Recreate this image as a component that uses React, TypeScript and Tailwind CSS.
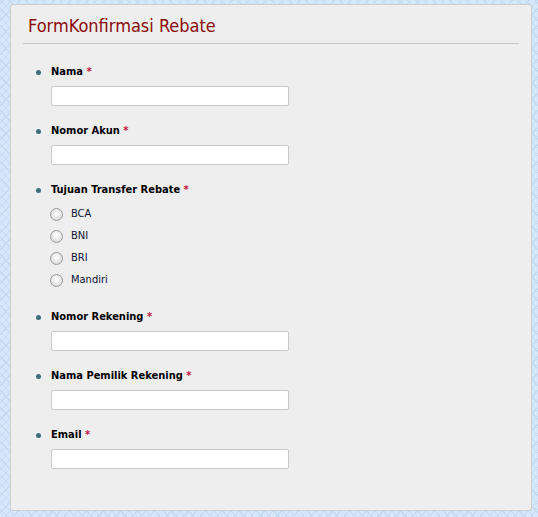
import React from 'react';

const font = "font-['DejaVu_Sans_Condensed','DejaVu_Sans',sans-serif]";

function Label({ text }: { text: string }) {
  return (
    <div className="flex items-center h-[14px] text-[11px] font-bold text-black leading-[14px]">
      <span className="w-[5px] h-[5px] rounded-full bg-[#3d6e7c] ml-[25px] mr-[10px]" />
      <span>
        {text} <span className="text-[#c0143c]">*</span>
      </span>
    </div>
  );
}

function TextField({ text }: { text: string }) {
  return (
    <div>
      <Label text={text} />
      <input
        type="text"
        className="block mt-[7px] ml-[40px] w-[238px] h-[20px] bg-white border border-[#c8c8c8] rounded-[2px] outline-none"
      />
    </div>
  );
}

function Radio({ text }: { text: string }) {
  return (
    <div className="flex items-center h-[22px] ml-[40px] text-[11px] text-[#111133]">
      <span className="w-[13px] h-[13px] rounded-full border border-[#9a9a9a] bg-[radial-gradient(circle_at_50%_40%,#ffffff_0%,#e4e4e4_60%,#cfcfcf_100%)] ml-[-1px] mr-[8px]" />
      <span>{text}</span>
    </div>
  );
}

export default function App() {
  return (
    <div
      className={`${font} w-[538px] h-[517px] pt-[4px] pl-[10px] pr-[6px] bg-[#d5e7fa] bg-[repeating-linear-gradient(45deg,transparent_0px,transparent_5px,#c4dbf2_5px,#c4dbf2_6px),repeating-linear-gradient(-45deg,transparent_0px,transparent_5px,#c4dbf2_5px,#c4dbf2_6px)]`}
    >
      <div className="h-[507px] bg-[#eeeeee] border border-[#cfcfcf] rounded-[3px]">
        <div className="mx-[12px] pt-[10px] pb-[6px] border-b border-[#c8c8c8]">
          <h1 className="pl-[5px] text-[18px] leading-[22px] text-[#8b0a0a] font-normal">
            FormKonfirmasi Rebate
          </h1>
        </div>
        <div className="pt-[21px] flex flex-col">
          <TextField text="Nama" />
          <div className="h-[18px]" />
          <TextField text="Nomor Akun" />
          <div className="h-[18px]" />
          <div>
            <Label text="Tujuan Transfer Rebate" />
            <div className="mt-[6px] flex flex-col">
              <Radio text="BCA" />
              <Radio text="BNI" />
              <Radio text="BRI" />
              <Radio text="Mandiri" />
            </div>
          </div>
          <div className="h-[19px]" />
          <TextField text="Nomor Rekening" />
          <div className="h-[18px]" />
          <TextField text="Nama Pemilik Rekening" />
          <div className="h-[18px]" />
          <TextField text="Email" />
        </div>
      </div>
    </div>
  );
}
